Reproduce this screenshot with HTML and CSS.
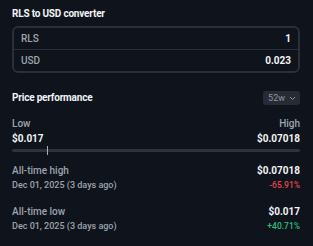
FILE: index.html
```html
<!DOCTYPE html>
<html lang="en">

<head>
    <meta charset="UTF-8">
    <meta name="viewport" content="width=device-width, initial-scale=1.0">
    <title>RLS to USD</title>
    <link rel="stylesheet" href="styles.css">
</head>

<body>

    <div class="panel">
        <div class="section-title">RLS to USD converter</div>
        <div class="converter">
            <div class="converter-row">
                <span class="label">RLS</span>
                <span class="value">1</span>
            </div>
            <div class="converter-row">
                <span class="label">USD</span>
                <span class="value">0.023</span>
            </div>
        </div>

        <div class="perf-head">
            <div class="section-title">Price performance</div>
            <div class="range-pill">52w
                <svg width="7" height="5" viewBox="0 0 7 5"><path d="M1 1 L3.5 3.5 L6 1" fill="none" stroke="currentColor" stroke-width="1"/></svg>
            </div>
        </div>

        <div class="range">
            <div class="range-col">
                <span class="label">Low</span>
                <span class="value">$0.017</span>
            </div>
            <div class="range-col right">
                <span class="label">High</span>
                <span class="value">$0.07018</span>
            </div>
        </div>
        <div class="range-bar">
            <div class="range-marker" style="left: 12%"></div>
        </div>

        <div class="stat">
            <div class="stat-line">
                <span class="label">All-time high</span>
                <span class="value">$0.07018</span>
            </div>
            <div class="stat-line">
                <span class="date">Dec 01, 2025 (3 days ago)</span>
                <span class="change down">-65.91%</span>
            </div>
        </div>

        <div class="stat">
            <div class="stat-line">
                <span class="label">All-time low</span>
                <span class="value">$0.017</span>
            </div>
            <div class="stat-line">
                <span class="date">Dec 01, 2025 (3 days ago)</span>
                <span class="change up">+40.71%</span>
            </div>
        </div>
    </div>

</body>

</html>
```

FILE: styles.css
```css
body {
    margin: 0;
    background-color: #0e131c;
    font-family: Roboto, "Noto Sans", sans-serif;
    color: #f2f3f5;
}

.panel {
    padding: 6px 13px 0 12px;
}

.section-title {
    font-size: 10px;
    font-weight: 700;
    line-height: 16px;
    letter-spacing: -0.2px;
}

.label {
    color: #9ea3ad;
    font-size: 10px;
    font-weight: 500;
}

.value {
    font-size: 10px;
    font-weight: 700;
}

.converter {
    margin-top: 4px;
    border: 2px solid #2a2f38;
    border-radius: 6px;
}

.converter-row {
    display: flex;
    justify-content: space-between;
    align-items: center;
    height: 21px;
    padding: 0 7px;
}

.converter-row + .converter-row {
    border-top: 1px solid #2a2f38;
}

.perf-head {
    display: flex;
    justify-content: space-between;
    align-items: center;
    margin-top: 17px;
}

.range-pill {
    display: flex;
    align-items: center;
    gap: 4px;
    height: 14px;
    padding: 0 4px 0 5px;
    border-radius: 3px;
    background-color: #262b36;
    color: #8f96a1;
    font-size: 9px;
}

.range {
    display: flex;
    justify-content: space-between;
    margin-top: 11px;
}

.range-col {
    display: flex;
    flex-direction: column;
    gap: 1px;
    line-height: 14px;
}

.range-col.right {
    align-items: flex-end;
}

.range-bar {
    position: relative;
    margin-top: 3px;
    height: 3px;
    border-radius: 2px;
    background-color: #2d323c;
}

.range-marker {
    position: absolute;
    top: -3px;
    width: 1px;
    height: 9px;
    background-color: #a9afb8;
}

.stat {
    margin-top: 12px;
}

.stat + .stat {
    margin-top: 13px;
}

.stat-line {
    display: flex;
    justify-content: space-between;
    align-items: center;
    line-height: 14px;
}

.date {
    color: #9ea3ad;
    font-size: 9px;
    font-weight: 500;
}

.change {
    font-size: 8.5px;
    font-weight: 500;
}

.down {
    color: #e5474d;
}

.up {
    color: #28c07a;
}
```
